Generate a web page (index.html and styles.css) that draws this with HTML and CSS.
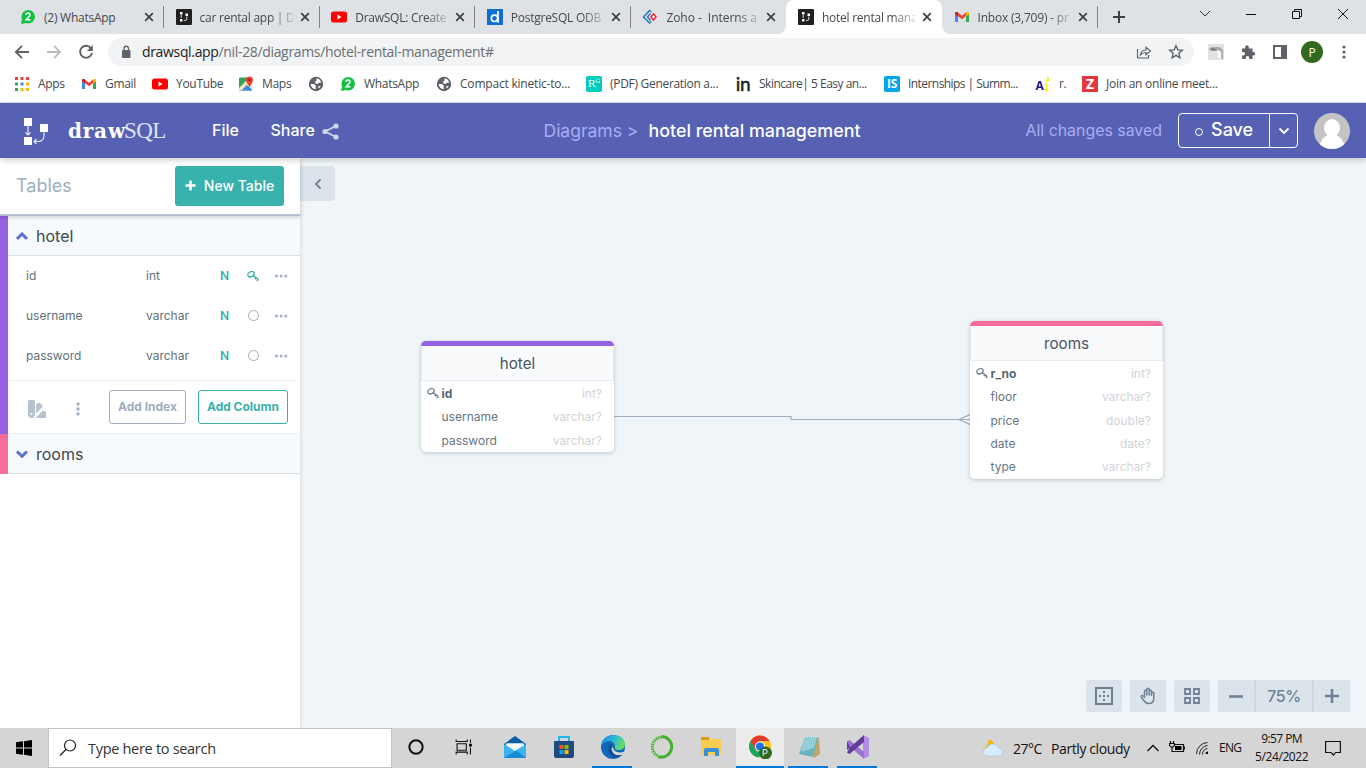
FILE: index.html
```html
<!DOCTYPE html>
<html lang="en">
<head>
<meta charset="utf-8">
<title>hotel rental management</title>
<link rel="stylesheet" href="styles.css">
</head>
<body>
<svg class="defs" aria-hidden="true">
  <symbol id="close" viewBox="0 0 16 16"><path d="M4.200 4.200l7.600 7.600M11.800 4.200l-7.600 7.600" stroke="#3c4043" stroke-width="1.700"/></symbol>
  <symbol id="whats" viewBox="0 0 16 16"><circle cx="8.200" cy="7.800" r="6.800" fill="#12c143"/><path d="M1 15l1-5 4 4z" fill="#12c143"/><path d="M6 6q0-2 2-2t2 1.800q0 1.200-1.600 2.400L6.200 10.700H10.400" fill="none" stroke="#fff" stroke-width="1.500"/></symbol>
  <symbol id="draw" viewBox="0 0 16 16"><rect width="16" height="16" rx="1" fill="#202020"/><path d="M4 3h2.500v2.500H4zM4 10h2.500v2.500H4zM9.500 4.500H12V7H9.500z" fill="#fff"/><path d="M5.200 6v3M10.800 7.500V10q0 1.500-2 1.500H8" fill="none" stroke="#ddd"/></symbol>
  <symbol id="yt" viewBox="0 0 16 16"><rect y="2.500" width="16" height="11" rx="2.500" fill="red"/><path d="M6.500 5.500v5l4-2.500z" fill="#fff"/></symbol>
  <symbol id="gmail" viewBox="0 0 16 16"><path d="M1 4v9h3V6z" fill="#4285f4"/><path d="M15 4v9h-3V6z" fill="#34a853"/><path d="M1 4.500Q1 2.300 3.300 3L8 6.700 12.700 3v3.500L8 10.300 1 5z" fill="#ea4335"/><path d="M12 3.600Q15 1.500 15 4.500v1L12 7.500z" fill="#fbbc04"/><path d="M1 4.500Q1 2 4 3.600V7L1 5.500z" fill="#c5221f"/></symbol>
  <symbol id="globe" viewBox="0 0 16 16"><circle cx="8" cy="8" r="7.200" fill="#5f6368"/><path d="M8.500 2.500q3.500 0 4.800 4L11 6.800 9.500 8 7.500 7.500 6.800 5.800 8.500 5zM2.600 8l3.900.3L8 10l-.5 1.500L8 13.300Q3.200 13 2.600 8zM10.200 10.500l2.500-.7q-.7 2-2.300 2.700z" fill="#fff"/></symbol>
  <symbol id="key" viewBox="0 0 12 12"><g fill="none" stroke="currentColor"><ellipse cx="4" cy="4.200" rx="3.300" ry="2.500" transform="rotate(-28 4 4.200)" stroke-width="1.300"/><path d="M1.600 7l2.200-.4M6 5.700l5.200 3.600" stroke-width="1.400"/><path d="M8 9.300l1.200-1.700M10 11l1.300-1.800" stroke-width="1.600"/></g></symbol>
  <symbol id="dots" viewBox="0 0 14 6"><g fill="currentColor"><circle cx="2.500" cy="3" r="1.500"/><circle cx="7.200" cy="3" r="1.500"/><circle cx="11.800" cy="3" r="1.500"/></g></symbol>
</svg>

<nav class="tabs">
  <div class="tab"><svg><use href="#whats"/></svg><span class="label">(2) WhatsApp</span><svg><use href="#close"/></svg></div>
  <div class="tab"><svg><use href="#draw"/></svg><span class="label">car rental app | D</span><svg><use href="#close"/></svg></div>
  <div class="tab"><svg><use href="#yt"/></svg><span class="label">DrawSQL: Create</span><svg><use href="#close"/></svg></div>
  <div class="tab"><svg viewBox="0 0 16 16"><path d="M0 0h16v16H0z" fill="#0b6fd3"/><circle cx="7.500" cy="9.300" r="3.200" fill="none" stroke="#fff" stroke-width="1.700"/><path d="M11 2v11.500" stroke="#fff" stroke-width="1.800"/></svg><span class="label">PostgreSQL ODB</span><svg><use href="#close"/></svg></div>
  <div class="tab before"><svg viewBox="0 0 16 16"><path d="M9.500 3L7.500 1.500 1.500 8l6 6 2-1.500M8.500 4.500L5.500 8l3 3.500" fill="none" stroke="#2878b8" stroke-width="1.500"/><path d="M11.500 5L14 8l-2.500 3L9 8z" fill="#fff" stroke="#e5323c" stroke-width="1.600"/></svg><span class="label zoho">Zoho -&nbsp; Interns a</span><svg><use href="#close"/></svg></div>
  <div class="tab active"><svg><use href="#draw"/></svg><span class="label">hotel rental mana</span><svg><use href="#close"/></svg></div>
  <div class="tab"><svg><use href="#gmail"/></svg><span class="label inbox">Inbox (3,709) - pr</span><svg><use href="#close"/></svg></div>
  <svg class="plus" viewBox="0 0 14 14"><path d="M7 1v12M1 7h12" stroke="#3c4043" stroke-width="2"/></svg>
  <div class="winbtns">
    <svg viewBox="0 0 14 14"><path d="M2 4l5 5 5-5" fill="none" stroke="#333"/></svg>
    <svg viewBox="0 0 14 14"><path d="M2 7.500h10" stroke="#111"/></svg>
    <svg viewBox="0 0 14 14"><path d="M2.500 4.500h7v7h-7zM4.500 4.500v-2h7v7h-2" fill="none" stroke="#111"/></svg>
    <svg viewBox="0 0 14 14"><path d="M2 2l10 10M12 2L2 12" stroke="#111"/></svg>
  </div>
</nav>

<div class="toolbar">
  <svg viewBox="0 0 16 16"><path d="M15 8H2M8 1.800L1.800 8 8 14.200" fill="none" stroke="#5f6368" stroke-width="1.800"/></svg>
  <svg viewBox="0 0 16 16"><path d="M1 8h13M8 1.800L14.200 8 8 14.200" fill="none" stroke="#babcbe" stroke-width="1.800"/></svg>
  <svg viewBox="0 0 16 16"><path d="M13.200 4.500A6 6 0 1 0 14 9" fill="none" stroke="#5f6368" stroke-width="1.900"/><path d="M14.800 1v6H8.800z" fill="#5f6368"/></svg>
  <div class="address">
    <svg class="lock" viewBox="0 0 10 14"><rect x="1" y="5" width="8.500" height="8" rx="1" fill="#5f6368"/><path d="M3 5.500V3.500a2.200 2.200 0 0 1 4.500 0v2" fill="none" stroke="#5f6368" stroke-width="1.300"/></svg>
    <span class="url"><b>drawsql.app</b>/nil-28/diagrams/hotel-rental-management#</span>
    <svg viewBox="0 0 16 16"><path d="M1.500 5v9h11v-3M4.500 11Q5 6 10 6V3.200L14.500 7 10 10.800V8.500Q6.500 8.300 4.500 11z" fill="none" stroke="#5f6368" stroke-width="1.200"/></svg>
    <svg viewBox="0 0 16 16"><path d="M8 1.800l1.800 4.100 4.500.4-3.400 3 1 4.400L8 11.400l-3.900 2.300 1-4.400-3.400-3 4.500-.4z" fill="none" stroke="#5f6368" stroke-width="1.400"/></svg>
  </div>
  <div class="extensions">
    <svg viewBox="0 0 16 16"><path d="M0 0h16v16H0z" fill="#e2e2e2"/><path d="M1 5q1-2.500 5-2h4q4 0 5 4v8h-1.500V9Q12 6 10 7L2 6.500z" fill="#aaa"/><path d="M2 4.500h5.500v2H4z" fill="#777"/><path d="M8.500 7q4-2 4 3v5l-3-2 1-4z" fill="#fff"/></svg>
    <svg viewBox="0 0 16 16"><path d="M2 4.500h3.200V3a1.800 1.800 0 0 1 3.600 0v1.500h3.700V8H13.500a1.700 1.700 0 0 1 0 3.400h-1V15H9.200v-1.300a1.700 1.700 0 0 0-3.400 0V15H2v-3.500h1.300a1.700 1.700 0 0 0 0-3.400H2z" fill="#5f6368"/></svg>
    <svg viewBox="0 0 16 16"><path d="M2 2h12v12H2z" fill="none" stroke="#5f6368" stroke-width="2"/><path d="M9 2h5v12H9z" fill="#5f6368"/></svg>
    <span class="profile">P</span>
    <svg class="more" viewBox="0 0 4 14"><g fill="#5f6368"><circle cx="2" cy="2" r="1.600"/><circle cx="2" cy="7" r="1.600"/><circle cx="2" cy="12" r="1.600"/></g></svg>
  </div>
</div>

<div class="bookmarks">
  <a><svg viewBox="0 0 16 16"><path d="M1 1h3v3H1zM6.500 1h3v3h-3zM12 1h3v3h-3z" fill="#ea4335"/><path d="M1 6.500h3v3H1z" fill="#34a853"/><path d="M6.500 6.500h3v3h-3z" fill="#4285f4"/><path d="M12 6.500h3v3h-3zM12 12h3v3h-3zM6.500 12h3v3h-3z" fill="#fbbc04"/><path d="M1 12h3v3H1z" fill="#34a853"/></svg><span class="t1">Apps</span></a>
  <a><svg><use href="#gmail"/></svg><span class="t2">Gmail</span></a>
  <a><svg><use href="#yt"/></svg><span class="t3">YouTube</span></a>
  <a><svg viewBox="0 0 16 16"><rect x="1" y="1.500" width="13" height="13" rx="1" fill="#34a45c"/><path d="M1 14.500L7 8.500l7 6z" fill="#4285f4"/><path d="M8 8.500l6-5v10z" fill="#e4e7ea"/><path d="M1 12l9-9 1.500 3-8 8.500H1z" fill="#f0e6c0"/><path d="M11.500 11Q8 6 8 4a3.500 3.500 0 0 1 7 0q0 2-3.500 7z" fill="#e74335"/><circle cx="11.500" cy="4" r="1.200" fill="#8d1c16"/></svg><span class="t4">Maps</span></a>
  <a><svg><use href="#globe"/></svg></a>
  <a><svg><use href="#whats"/></svg><span class="t6">WhatsApp</span></a>
  <a><svg><use href="#globe"/></svg><span class="t7">Compact kinetic-to...</span></a>
  <a><span class="fav rg">R<sup>G</sup></span><span class="t8">(PDF) Generation a...</span></a>
  <a><span class="fav in">in</span><span class="t9">Skincare| 5 Easy an...</span></a>
  <a><span class="fav is">IS</span><span class="t10">Internships | Summ...</span></a>
  <a><span class="fav ai">A<svg viewBox="0 0 7 16"><path d="M2.500 6.500L5 0l2 5-2.500.5zM2 7.500h3L4 14h1.500l-.3 1.300H1.500L2.700 9H1.700z" fill="#fbf616"/></svg></span><span class="t11">r.</span></a>
  <a><span class="fav zed">Z</span><span class="t12">Join an online meet...</span></a>
</div>

<header class="app-header">
  <svg class="mark" viewBox="0 0 26 28"><path d="M1 0h8v8H1zM1 19h8v8H1zM17 6h8v8h-8z" fill="#fff"/><path d="M5 8v9M2.500 14.500L5 17l2.500-2.500M21 14v3q0 6.500-6 6.500h-4M13.500 21L11 23.500l2.500 2.500" fill="none" stroke="#e6e9fa" stroke-width="1.200"/></svg>
  <span class="wordmark"><b>draw</b><i>SQL</i></span>
  <span class="file">File</span>
  <span class="share">Share</span>
  <svg class="share-icon" viewBox="0 0 17 17"><path d="M14 3L3 8.500 14 14" fill="none" stroke="#cfd5ea" stroke-width="1.800"/><g fill="#cfd5ea"><circle cx="14" cy="3" r="2.600"/><circle cx="3" cy="8.500" r="2.600"/><circle cx="14" cy="14" r="2.600"/></g></svg>
  <span class="crumb">Diagrams &gt;</span>
  <span class="name">hotel rental management</span>
  <span class="status">All changes saved</span>
  <div class="save"><span class="save-main"><i></i>Save</span><span class="save-drop"><svg viewBox="0 0 12 8"><path d="M1.500 1.500L6 6l4.500-4.500" fill="none" stroke="#fff" stroke-width="1.800"/></svg></span></div>
  <svg class="avatar" viewBox="0 0 36 36"><clipPath id="round"><circle cx="18" cy="18" r="18"/></clipPath><g clip-path="url(#round)"><path d="M0 0h36v36H0z" fill="#c4c4c4"/><ellipse cx="18" cy="15" rx="8" ry="9" fill="#fff"/><path d="M5 36q1-11 9-14h8q8 3 9 14z" fill="#fff"/></g></svg>
</header>

<main>
  <aside>
    <div class="side-head"><h2>Tables</h2><button class="new"><svg viewBox="0 0 12 12"><path d="M6 .5v11M.5 6h11" stroke="#fff" stroke-width="2.800"/></svg><span>New Table</span></button></div>
    <section class="purple">
      <h3><svg viewBox="0 0 12 8"><path d="M1 6.800L6 2l5 4.800" fill="none" stroke="#5f6ecf" stroke-width="3"/></svg><span>hotel</span></h3>
      <div class="rows">
        <div class="row"><span>id</span><span>int</span><b>N</b><svg class="key"><use href="#key"/></svg><svg class="dots"><use href="#dots"/></svg></div>
        <div class="row"><span>username</span><span>varchar</span><b>N</b><i></i><svg class="dots"><use href="#dots"/></svg></div>
        <div class="row"><span>password</span><span>varchar</span><b>N</b><i></i><svg class="dots"><use href="#dots"/></svg></div>
      </div>
      <div class="actions">
        <svg class="swatch" viewBox="0 0 18 18"><path fill-rule="evenodd" d="M1.500 0h4Q7 0 7 1.500V14.500Q7 18 3.500 18T0 14.500v-13Q0 0 1.500 0zM3.500 13a1 1 0 1 0 0 2 1 1 0 0 0 0-2z"/><path d="M8 4.500l2-1.700q1-.8 1.900.1l2.400 2.400q1 1 0 2L8 13.500zM14.300 11H16.500Q18 11 18 12.500v4Q18 18 16.500 18H7.500z"/></svg>
        <svg class="vdots" viewBox="0 0 4 14"><circle cx="2" cy="2" r="1.700"/><circle cx="2" cy="7" r="1.700"/><circle cx="2" cy="12" r="1.700"/></svg>
        <button class="index">Add Index</button><button class="column">Add Column</button>
      </div>
    </section>
    <section class="pink"><h3><svg viewBox="0 0 12 8"><path d="M1 1.500l5 4.800 5-4.800" fill="none" stroke="#5f6ecf" stroke-width="3"/></svg><span>rooms</span></h3></section>
  </aside>
  <div class="canvas">
    <span class="collapse"><svg viewBox="0 0 8 12"><path d="M6.500 1.500L2 6l4.500 4.500" fill="none" stroke="#718096" stroke-width="1.900"/></svg></span>
    <svg class="link" viewBox="0 0 358 14"><path d="M0 4.500h178v3h180M358 2L346 7.500l12 5.500" fill="none" stroke="#a0aec0" stroke-width="1.200"/></svg>
    <div class="node hotel"><h4>hotel</h4><ul>
      <li class="pk"><svg><use href="#key"/></svg><b>id</b><i>int?</i></li>
      <li><b>username</b><i>varchar?</i></li>
      <li><b>password</b><i>varchar?</i></li></ul></div>
    <div class="node rooms"><h4>rooms</h4><ul>
      <li class="pk"><svg><use href="#key"/></svg><b>r_no</b><i>int?</i></li>
      <li><b>floor</b><i>varchar?</i></li>
      <li><b>price</b><i>double?</i></li>
      <li><b>date</b><i>date?</i></li>
      <li><b>type</b><i>varchar?</i></li></ul></div>
    <div class="controls">
      <span><svg viewBox="0 0 18 18"><path d="M1 1h16v16H1z" fill="none" stroke="#718096" stroke-width="2"/><path d="M8 4h2v2H8zM8 8h2v2H8zM8 12h2v2H8zM4 8h2v2H4zM12 8h2v2h-2z" fill="#718096"/></svg></span>
      <span><svg viewBox="0 0 18 18"><path d="M5.500 9V4.200a1.200 1.200 0 0 1 2.300 0V2.500a1.200 1.200 0 0 1 2.400 0v1.700a1.200 1.200 0 0 1 2.300 0V6a1.200 1.200 0 0 1 2.300 0v5.500q0 5-5 5-3 0-4.500-2.500L2.500 10.500q-.8-2 .8-2L5.500 10zM7.800 4v4.500M10.200 4v4.500M12.500 6v3" fill="none" stroke="#718096" stroke-width="1.500"/></svg></span>
      <span><svg viewBox="0 0 18 18"><path d="M2 2h5v5H2zM11 2h5v5h-5zM2 11h5v5H2zM11 11h5v5h-5z" fill="none" stroke="#718096" stroke-width="1.800"/></svg></span>
      <div class="zoom"><span><svg viewBox="0 0 14 14"><path d="M0 7.500h14" stroke="#718096" stroke-width="2.600"/></svg></span><span class="pct">75%</span><span><svg viewBox="0 0 14 14"><path d="M0 7h14M7 0v14" stroke="#718096" stroke-width="2.600"/></svg></span></div>
    </div>
  </div>
</main>

<footer class="taskbar">
  <span class="start"><svg viewBox="0 0 16 16"><path d="M0 2.300L7 1.300V7.500H0zM8 1.200L16 0v7.500H8zM0 8.500h7v6.200L0 13.700zM8 8.500h8V16L8 14.800z"/></svg></span>
  <div class="search"><svg viewBox="0 0 18 18"><circle cx="11" cy="6.500" r="5.500" fill="none" stroke="#222" stroke-width="1.200"/><path d="M7 10.500L1 16.500" stroke="#222" stroke-width="1.200"/></svg><span>Type here to search</span></div>
  <div class="apps">
    <span class="cortana"><svg viewBox="0 0 26 26"><circle cx="13" cy="13" r="7.200" fill="none" stroke="#111" stroke-width="2.200"/></svg></span>
    <span class="taskview"><svg viewBox="0 0 26 26"><path d="M5.500 9.500h10v7h-10zM4.500 7.500V5M4.500 7h12V5M4.500 21v-2.500h12V21M20 5v3.500M20 13.500v7.500" fill="none" stroke="#111" stroke-width="1.200"/><path d="M18.500 9.500h3v3h-3z"/></svg></span>
    <span><svg viewBox="0 0 24 24"><path d="M1 9L12 1l11 8v3H1z" fill="#0b5cab"/><path d="M3 8.500h18v5L12 18l-9-4.500z" fill="#f5f8fb"/><path d="M1 9l11 7L23 9v14H1z" fill="#3bb5ef"/><path d="M4 8.500h16L12 15z" fill="#f5f8fb"/><path d="M1 23l12-7.500L23 23z" fill="#168bd6"/></svg></span>
    <span><svg viewBox="1 1 24 24"><path d="M3 7h20v15q0 2-2 2H5q-2 0-2-2z" fill="#1d4b80"/><path d="M8 7V3h10v4" fill="none" stroke="#28b6ee" stroke-width="2"/><path d="M8.500 11h4v4h-4z" fill="#f35325"/><path d="M13.500 11h4v4h-4z" fill="#81bc06"/><path d="M8.500 16h4v4h-4z" fill="#05a6f0"/><path d="M13.500 16h4v4h-4z" fill="#ffba08"/></svg></span>
    <span class="open"><svg viewBox="1 1 24 24"><defs><linearGradient id="edge" x2="1" y2=".4"><stop stop-color="#1685d9"/><stop offset=".55" stop-color="#29b9dc"/><stop offset="1" stop-color="#67dc62"/></linearGradient></defs><circle cx="13" cy="13" r="12" fill="#1267b7"/><path d="M1.500 11Q4 1 14 1q11 1 11 9 0 6-7 6-4 0-3-3 0-5-5-6-5 0-8.500 4z" fill="url(#edge)"/><path d="M13 13q0 5 7 5.500 3 0 5-1.500l-2 3.500Q15 23 12 18q-1.500-3 1-5z" fill="#d6dbe0"/><path d="M10 10q-4 7 2 12 5 3 10-1-7 2-10-4-2-4 0-7z" fill="#164b91"/></svg></span>
    <span><svg viewBox="1 1 24 24"><path d="M13 2.500A10.300 10.300 0 1 1 9 22.500" fill="none" stroke="#43b02a" stroke-width="3"/><path d="M13 3A10 10 0 0 0 9 22" fill="none" stroke="#43b02a" stroke-width="3" stroke-dasharray="1.500 .9"/></svg></span>
    <span><svg viewBox="1 1 24 24"><path d="M3 3h8l2 2h10v16H3z" fill="#f9cc54"/><path d="M3 3h8v3H3z" fill="#d99b13"/><path d="M6 22v-6q0-2 2-2h11q2 0 2 2v6h-4v-4h-7v4z" fill="#3a91d8"/></svg></span>
    <span class="open chrome"><svg viewBox="1 1 24 24"><circle cx="13" cy="12.500" r="11" fill="#fbc116"/><path d="M3.500 7A11 11 0 0 1 22.500 7H13l-5 8z" fill="#e33b2e"/><path d="M3.500 7A11 11 0 0 0 12 23.500l4-7-6 1z" fill="#1da462"/><circle cx="13" cy="12.500" r="5" fill="#fff"/><circle cx="13" cy="12.500" r="4" fill="#1a73e8"/><circle cx="18.500" cy="19" r="6.500" fill="#33691e"/></svg><em>P</em></span>
    <span class="open"><svg viewBox="1 1 24 24"><path d="M9 3h14l1 17-6 4z" fill="#c2a36a"/><path d="M9 3h13l-5 20-14-3z" fill="#65b3bd"/><path d="M8 4h13l-3 10-13 4z" fill="#91cfd5"/><path d="M9 3h13" stroke="#ddd" stroke-width="2" stroke-dasharray="1 1"/></svg></span>
    <span class="open"><svg viewBox="1 1 24 24"><path d="M18 1l6 3v18l-6 3z" fill="#b38ae4"/><path d="M2 7.500L4.500 6 19 18v7L2 10z" fill="#9b72d4"/><path d="M2 18.500V7.500l3 5.500-3 5.500 2.500 1.500L19 8V1L2 16z" fill="#643b9d"/></svg></span>
  </div>
  <div class="tray">
    <svg class="weather" viewBox="0 0 22 20"><path d="M7 1q5 1 6 6l-6 6-7-2q6-1 7-10z" fill="#f7b900"/><path d="M6 18.500a4.500 4.500 0 0 1-.3-9A6 6 0 0 1 17 10a4.300 4.300 0 0 1 1 8.500z" fill="#d8ebfa" stroke="#a6cbea" stroke-width=".7"/></svg>
    <span class="temp">27°C</span><span class="sky">Partly cloudy</span>
    <svg class="chev" viewBox="0 0 14 14"><path d="M1.500 10L7 4.500l5.500 5.500" fill="none" stroke="#111" stroke-width="1.300"/></svg>
    <svg class="batt" viewBox="0 0 16 14"><path d="M6 3.500h8.500v7H5M15.500 5.500v3M1.500 0v2.500M4.500 0v2.500M.5 2.500h5v2L4 6H2L.5 4.500zM3 6v4.500h3" fill="none" stroke="#111" stroke-width="1.200"/><path d="M6 5h6.500v4H6z"/></svg>
    <svg class="wifi" viewBox="0 0 14 14"><path d="M1.500 13A11.500 11.500 0 0 1 12.500 1.500M4.500 13.500a9 9 0 0 1 8-9M7.500 13.500a6 6 0 0 1 5-6" fill="none" stroke="#222"/><path d="M13 10.500a2.500 2.500 0 0 0-2.500 2.500H13z"/></svg>
    <span class="lang">ENG</span>
    <span class="clock"><span>9:57 PM</span><span class="date">5/24/2022</span></span>
    <svg class="note" viewBox="0 0 16 16"><path d="M.6 1.500h14.800v11H10.500L8.500 15 6 12.500H.6z" fill="none" stroke="#111" stroke-width="1.200"/></svg>
  </div>
</footer>
</body>
</html>
```
FILE: styles.css
```css
* { box-sizing: border-box; }
body { margin: 0; width: 1366px; height: 768px; overflow: hidden; display: flex; flex-direction: column; font-family: Inter, sans-serif; background: #fff; }
svg { width: 16px; height: 16px; flex: none; display: block; }
.defs { position: absolute; width: 0; height: 0; }
span, b, i { white-space: nowrap; }
h2, h3, h4, ul { margin: 0; padding: 0; font-weight: 400; }
button { font-family: inherit; padding: 0; }
.tabs, .toolbar, .bookmarks, .taskbar { font-family: "Open Sans", sans-serif; }

.tabs { height: 34px; flex: none; background: #dee1e6; padding-left: 8.500px; display: flex; align-items: center; }
.tab { width: 155.600px; height: 34px; flex: none; display: flex; align-items: center; padding-left: 11.500px; border-right: 1px solid transparent; border-image: linear-gradient(transparent 7px, #80868b 7px 27px, transparent 27px) 1; }
.tab .label { width: 93px; flex: none; margin: 0 4px 0 8px; font-size: 12px; letter-spacing: -.25px; color: #45494d; mask-image: linear-gradient(90deg, #000 70px, #0003 93px); }
.tab:first-child .label { mask-image: none; }
.tab .zoho { letter-spacing: -.05px; }
.tab .inbox { letter-spacing: -.2px; }
.tab.before { border-image: none; }
.tab.active { background: #fff; border: 0; border-radius: 8px 8px 0 0; position: relative; }
.tab.active::before, .tab.active::after { content: ""; position: absolute; bottom: 0; width: 8px; height: 8px; left: -8px; background: radial-gradient(circle at 0 0, #dee1e6 7.500px, #fff 8px); }
.tab.active::after { left: 100%; background: radial-gradient(circle at 100% 0, #dee1e6 7.500px, #fff 8px); }
.plus { width: 14px; height: 14px; margin-left: 14px; }
.winbtns { margin-left: auto; padding: 0 16px 6px 0; display: flex; gap: 32px; }
.winbtns svg { width: 14px; height: 14px; }

.toolbar { height: 36px; flex: none; display: flex; align-items: center; padding-left: 14px; }
.toolbar > svg { margin-right: 16px; }
.address { width: 1086px; height: 28px; margin-left: -2px; border-radius: 14px; background: #f1f3f4; display: flex; align-items: center; padding: 0 10px 0 13px; gap: 16px; }
.address .lock { width: 10px; height: 14px; margin-right: -5px; }
.url { flex: 1; font-size: 14px; letter-spacing: -.34px; color: #6b6f73; padding-bottom: 1px; }
.url b { font-weight: 400; color: #202124; }
.extensions { flex: 1; display: flex; align-items: center; padding-left: 14px; gap: 16px; }
.profile { width: 22px; height: 22px; border-radius: 50%; background: #33691e; color: #fff; display: grid; place-items: center; font-size: 12px; margin-left: -3px; }
.more { width: 4px; height: 14px; margin-left: 3px; }

.bookmarks { height: 33px; flex: none; display: flex; align-items: center; padding: 0 0 5px 14px; font-size: 12px; color: #45494d; border-bottom: 1px solid #d9dce0; }
.bookmarks a { display: flex; align-items: center; gap: 8px; margin-right: 16px; letter-spacing: -.3px; }
.t1 { width: 27px; } .t2 { width: 31px; } .t3 { width: 46px; } .t4 { width: 30px; } .t6 { width: 56px; }
.t7 { width: 110px; letter-spacing: -.2px; } .t8 { width: 109px; } .t9 { width: 109px; letter-spacing: -.5px; } .t10 { width: 111px; letter-spacing: -.56px; } .t11 { width: 7px; } .t12 { letter-spacing: -.25px; }
.fav { width: 16px; height: 16px; display: flex; align-items: center; justify-content: center; font: 700 12px/16px "Open Sans", sans-serif; color: #fff; }
.rg { background: #00ccbb; border-radius: 2px; font-family: "DejaVu Serif", serif; font-size: 10px; font-weight: 400; letter-spacing: 0; }
.rg sup { font-size: 6px; line-height: 6px; align-self: flex-start; margin-top: 2px; }
.in { color: #222; font: 400 19px/16px Lato, sans-serif; -webkit-text-stroke: .5px #222; }
.is { background: #00a5ec; border-radius: 2px; }
.ai { color: #1a1781; font-size: 12px; line-height: 13px; align-items: flex-end; }
.ai svg { width: 7px; height: 16px; }
.zed { background: #e5383b; font-size: 14px; }

.app-header { height: 55px; flex: none; background: #5661b3; display: flex; align-items: center; padding-left: 23px; color: #fff; position: relative; z-index: 3; box-shadow: 0 2px 6px #0003; }
.mark { width: 26px; height: 28px; margin-top: 2px; }
.wordmark { width: 97px; margin-left: 19px; font-size: 20px; line-height: 26px; display: flex; align-items: baseline; }
.wordmark b { font-family: "DejaVu Serif", serif; letter-spacing: .8px; width: 56px; }
.wordmark i { font-family: "Liberation Serif", serif; font-style: normal; font-size: 23px; letter-spacing: -.6px; color: #dfe3fa; }
.file { width: 27px; margin-left: 47px; font-size: 16px; font-weight: 500; padding-bottom: 2px; }
.share { width: 45px; margin-left: 31.500px; font-size: 16px; font-weight: 500; padding-bottom: 2px; }
.share-icon { width: 17px; height: 17px; margin: 1px 0 0 6.500px; }
.crumb { width: 96px; margin-left: 204.500px; font-size: 17.500px; color: #a8adf3; }
.name { width: 212px; margin-left: 9px; font-size: 17.850px; font-weight: 500; }
.status { width: 137px; margin-left: 165px; font-size: 15.900px; color: #a8adf3; }
.save { width: 120px; height: 35px; margin-left: 15.500px; border: 1px solid #fff; border-radius: 4px; display: flex; }
.save-main { width: 91px; border-right: 1px solid #fff; display: flex; align-items: center; font-size: 18px; font-weight: 500; padding: 0 0 2px 16px; }
.save-main i { width: 8px; height: 8px; border: 1.500px solid #fff; border-radius: 50%; margin: 4px 8px 0 0; }
.save-drop { flex: 1; display: grid; place-items: center; }
.save-drop svg { width: 12px; height: 8px; }
.avatar { width: 36px; height: 36px; margin-left: 16px; }

main { height: 570px; flex: none; display: flex; }
aside { width: 300px; flex: none; background: #fff; box-shadow: 0 0 5px #0002; z-index: 1; }
.side-head { height: 58px; border-bottom: 2px solid #b8c2d0; display: flex; align-items: center; justify-content: space-between; padding: 0 16px; box-shadow: 0 2px 4px #0002; position: relative; }
h2 { font-size: 18px; color: #a0aec0; padding-bottom: 1px; }
.new { width: 109px; height: 40px; border: 0; border-radius: 3px; background: #38b2ac; color: #fff; font-size: 14px; font-weight: 500; display: flex; align-items: center; justify-content: center; gap: 8px; padding-bottom: 1px; }
.new svg { width: 11px; height: 11px; }
section { border-left: 8px solid #9561e2; }
section.pink { border-color: #f66d9b; }
h3 { height: 40px; border-bottom: 1px solid #d8e0e8; background: #f6fafd; display: flex; align-items: center; gap: 8px; padding-left: 8px; color: #3d4852; font-size: 16px; }
.purple h3 { padding-top: 1px; }
h3 svg { width: 12px; height: 8px; }
.rows { height: 125px; margin-right: 4px; border-bottom: 1px solid #edf0f3; }
.row { height: 40px; padding: 0 0 1px 18px; display: grid; grid-template-columns: 120px 73px 13px 42px 14px; align-items: center; font-size: 12px; color: #606f7b; }
.row b { color: #38b2ac; font-weight: 600; padding-left: 1px; }
.row i { width: 11px; height: 11px; border: 1px solid #a0aec0; border-radius: 50%; justify-self: center; }
.row .key { width: 12px; height: 12px; color: #38b2ac; justify-self: center; }
.dots { width: 14px; height: 6px; color: #a0aec0; margin-top: 1px; }
.actions { height: 53px; border-bottom: 1px solid #edf0f3; display: flex; align-items: center; padding-left: 20px; }
.swatch { width: 18px; height: 18px; fill: #b8c2cc; margin-top: 3px; }
.vdots { width: 4px; height: 14px; fill: #a0aec0; margin: 3px 29.500px 0 29.500px; }
.actions button { height: 34px; border: 1px solid #a0aec0; border-radius: 3px; background: #fff; color: #a0aec0; font-size: 12px; font-weight: 700; padding-bottom: 2px; }
.actions .index { width: 77px; margin-right: 12px; }
.actions .column { width: 90px; border-color: #38b2ac; color: #38b2ac; }

.canvas { flex: 1; background: #eff5f8; position: relative; }
.collapse { position: absolute; left: 0; top: 8px; width: 35px; height: 35px; background: #dae4ea; border-radius: 0 4px 4px 0; display: grid; place-items: center; }
.collapse svg { width: 8px; height: 12px; }
.link { position: absolute; left: 313px; top: 254px; width: 358px; height: 14px; }
.node { position: absolute; width: 193px; border-radius: 5px; background: #fff; overflow: hidden; box-shadow: 0 1px 4px #0003; border-top: 5px solid #9561e2; }
.node.hotel { left: 121px; top: 183px; height: 111px; }
.node.rooms { left: 670px; top: 163px; height: 157.500px; border-color: #f66d9b; }
h4 { height: 35px; background: #f8fafc; border: 1px solid #e6ebf3; border-top: 0; font-size: 15.200px; line-height: 35px; text-align: center; color: #4a5560; }
ul { list-style: none; padding-top: .8px; }
li { height: 23.300px; display: flex; align-items: center; padding: 0 12px 0 20.500px; font-size: 12px; color: #667585; }
li b { font-weight: 400; }
li i { margin-left: auto; font-style: normal; color: #d1d4d7; }
li.pk { padding-left: 6px; }
li.pk b { font-weight: 700; color: #5a6774; }
li svg { width: 12px; height: 12px; margin-right: 2.500px; color: #7a8490; }
.controls { position: absolute; right: 16px; top: 522px; display: flex; gap: 8px; }
.controls span { width: 36px; height: 32px; border-radius: 3px; background: #dae4ea; display: grid; place-items: center; }
.controls svg { width: 18px; height: 18px; }
.zoom { display: flex; width: 132px; }
.zoom svg { width: 14px; height: 14px; }
.zoom .pct { flex: 1; border: 2px solid #cbd7e2; border-width: 0 2px; border-radius: 0; color: #718096; font-size: 16px; font-weight: 500; letter-spacing: -.4px; }

.taskbar { height: 40px; flex: none; background: #d5d5d5; display: flex; color: #111; position: relative; z-index: 2; }
.start { width: 48px; display: grid; place-items: center; }
.search { width: 344px; border: 1px solid #c4c4c4; background: #fff; display: flex; align-items: center; padding-left: 10px; gap: 11px; font-size: 14.500px; letter-spacing: -.3px; color: #333; }
.search svg { width: 18px; height: 18px; }
.apps { width: 489px; display: flex; }
.apps > span { width: 49px; flex: none; display: grid; place-items: center; position: relative; border-bottom: 2px solid transparent; }
.apps .cortana { width: 48px; }
.apps .taskview { width: 48px; margin-right: 2px; }
.apps svg { width: 24px; height: 24px; }
.apps .open { background: linear-gradient(#0078d7, #0078d7) 4px 38px / 40px 2px no-repeat; background-origin: border-box; background-clip: border-box; }
.apps .open.chrome { background: linear-gradient(#0078d7, #0078d7) 1px 38px / 48px 2px no-repeat, linear-gradient(#ececec, #ececec) 1px 0 / 48px 40px no-repeat; background-origin: border-box; background-clip: border-box; }
.chrome em { position: absolute; left: 27px; top: 19px; font: 9px/12px Roboto, sans-serif; color: #fff; }
.tray { flex: 1; display: flex; align-items: center; padding-left: 101px; font-size: 14px; }
.weather { width: 21px; height: 20px; }
.temp { width: 31px; margin-left: 10px; letter-spacing: -.5px; }
.sky { width: 80px; margin-left: 7px; letter-spacing: -.4px; }
.chev { width: 14px; height: 14px; margin-left: 15px; }
.batt { width: 16px; height: 14px; margin-left: 9px; }
.wifi { width: 14px; height: 14px; margin-left: 10px; }
.lang { width: 23px; margin-left: 10px; font-size: 12px; letter-spacing: -.7px; padding-bottom: 2px; }
.clock { width: 52px; margin-left: 13px; font-size: 12px; line-height: 18px; display: grid; justify-items: center; letter-spacing: -.6px; }
.clock .date { letter-spacing: -.4px; }
.note { margin-left: 18px; }
```
